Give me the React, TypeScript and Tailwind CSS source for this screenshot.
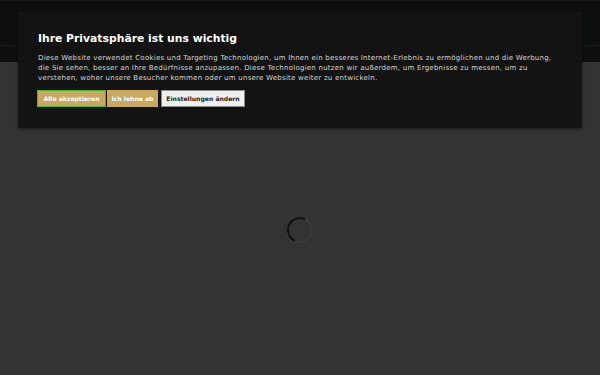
import React from "react";

export default function App() {
  return (
    <div className="relative w-[600px] h-[375px] overflow-hidden bg-[#333333]" style={{ fontFamily: '"DejaVu Sans", sans-serif' }}>
      <div className="h-[1px] bg-[#1c1c1c]" />
      <div className="h-[45px] bg-[#0d0f0f] border-b border-[#1c1e1e]" />
      <div className="h-[16px] bg-[#0d0f0f]" />
      <div className="flex justify-center pt-[155px]">
        <div className="w-[26px] h-[26px] rounded-full border-[2px] border-[#3a3a3a] border-t-[#111] border-l-[#111] -rotate-[20deg]" />
      </div>
      <div className="absolute left-[18px] top-[12px] w-[564px] h-[116px] bg-[#131313] shadow-[0_1px_3px_rgba(0,0,0,0.5)] px-[20px] pt-[20px]">
        <h2 className="text-[10.8px] font-bold text-white leading-[13px]">Ihre Privatsphäre ist uns wichtig</h2>
        <p className="mt-[8px] text-[7px] leading-[10px] text-[#d6d6d6] tracking-[0.24px]">
          Diese Website verwendet Cookies und Targeting Technologien, um Ihnen ein besseres Internet-Erlebnis zu ermöglichen und die Werbung, die Sie sehen, besser an Ihre Bedürfnisse anzupassen. Diese Technologien nutzen wir außerdem, um Ergebnisse zu messen, um zu verstehen, woher unsere Besucher kommen oder um unsere Website weiter zu entwickeln.
        </p>
        <div className="mt-[7px] -ml-[1px] flex items-center">
          <button className="h-[17px] w-[69px] whitespace-nowrap bg-[#c7a862] border border-[#55b52a] text-white text-[6.1px] font-bold">Alle akzeptieren</button>
          <button className="ml-[1px] h-[17px] w-[51px] whitespace-nowrap bg-[#c7a862] border border-[#c7a862] text-white text-[6.1px] font-bold">Ich lehne ab</button>
          <button className="ml-[3px] h-[17px] w-[84px] whitespace-nowrap bg-[#efefef] border border-[#8a8a8a] text-[#222] text-[6.1px] font-bold">Einstellungen ändern</button>
        </div>
      </div>
    </div>
  );
}
